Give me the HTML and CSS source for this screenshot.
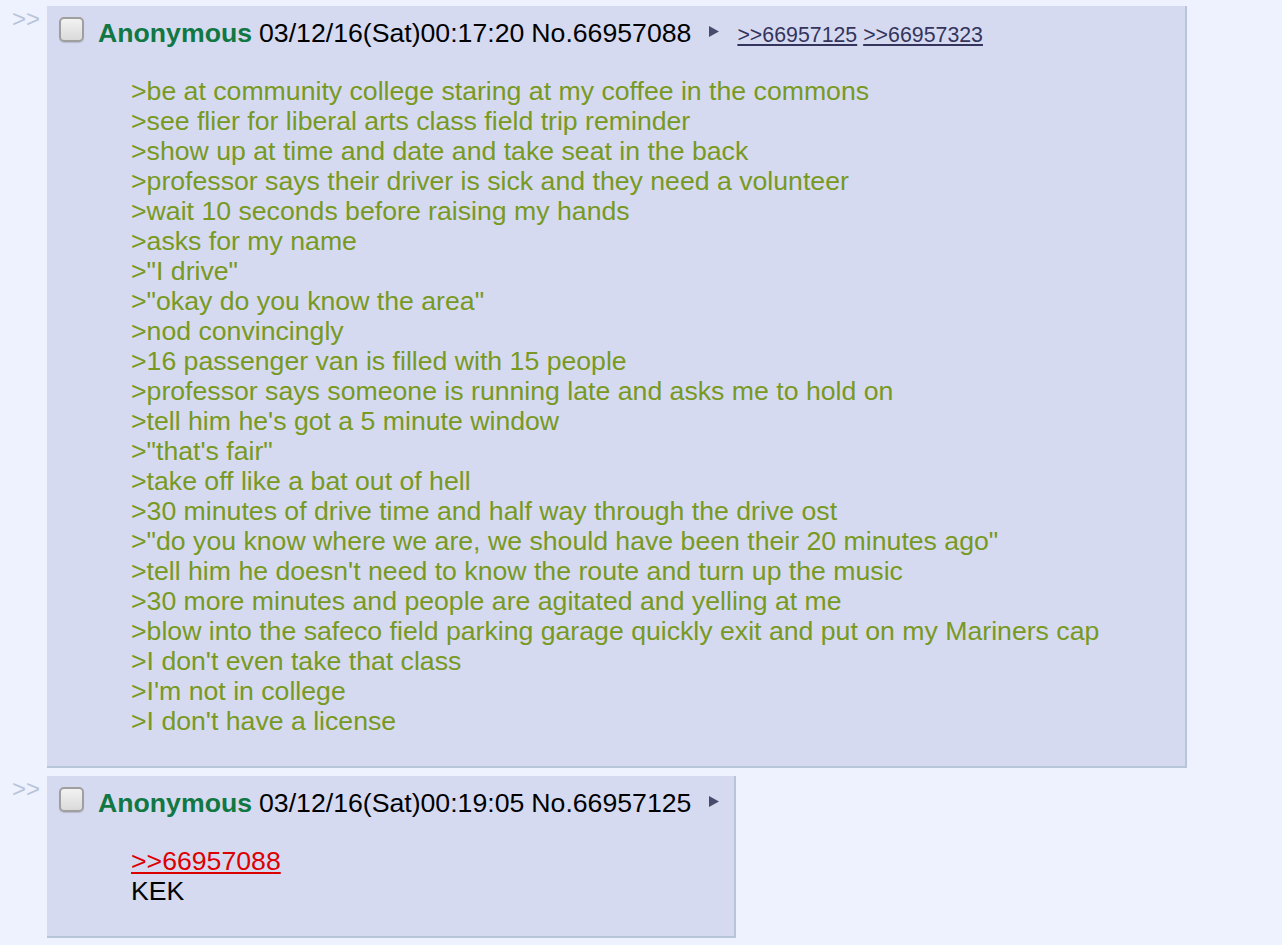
FILE: index.html
```
<!DOCTYPE html>
<html lang="en">
<head>
    <meta charset="UTF-8">
    <title>/b/ - Thread</title>
    <link rel="stylesheet" href="styles.css">
</head>
<body>
    <div class="thread">
        <div class="reply-wrap">
            <div class="side-arrows">&gt;&gt;</div>
            <div class="post">
                <div class="post-info">
                    <span class="check"></span>
                    <span class="name">Anonymous</span>
                    <span class="date">03/12/16(Sat)00:17:20</span>
                    <span class="num">No.66957088</span>
                    <svg class="menu-btn" width="10" height="11" viewBox="0 0 10 11"><path d="M0 0 L10 5.5 L0 11 Z"/></svg>
                    <span class="backlinks"><a href="#p66957125">&gt;&gt;66957125</a> <a href="#p66957323">&gt;&gt;66957323</a></span>
                </div>
                <blockquote class="message">
                    <span class="quote">&gt;be at community college staring at my coffee in the commons</span><br>
                    <span class="quote">&gt;see flier for liberal arts class field trip reminder</span><br>
                    <span class="quote">&gt;show up at time and date and take seat in the back</span><br>
                    <span class="quote">&gt;professor says their driver is sick and they need a volunteer</span><br>
                    <span class="quote">&gt;wait 10 seconds before raising my hands</span><br>
                    <span class="quote">&gt;asks for my name</span><br>
                    <span class="quote">&gt;"I drive"</span><br>
                    <span class="quote">&gt;"okay do you know the area"</span><br>
                    <span class="quote">&gt;nod convincingly</span><br>
                    <span class="quote">&gt;16 passenger van is filled with 15 people</span><br>
                    <span class="quote">&gt;professor says someone is running late and asks me to hold on</span><br>
                    <span class="quote">&gt;tell him he's got a 5 minute window</span><br>
                    <span class="quote">&gt;"that's fair"</span><br>
                    <span class="quote">&gt;take off like a bat out of hell</span><br>
                    <span class="quote">&gt;30 minutes of drive time and half way through the drive ost</span><br>
                    <span class="quote">&gt;"do you know where we are, we should have been their 20 minutes ago"</span><br>
                    <span class="quote">&gt;tell him he doesn't need to know the route and turn up the music</span><br>
                    <span class="quote">&gt;30 more minutes and people are agitated and yelling at me</span><br>
                    <span class="quote">&gt;blow into the safeco field parking garage quickly exit and put on my Mariners cap</span><br>
                    <span class="quote">&gt;I don't even take that class</span><br>
                    <span class="quote">&gt;I'm not in college</span><br>
                    <span class="quote">&gt;I don't have a license</span>
                </blockquote>
            </div>
        </div>

        <div class="reply-wrap">
            <div class="side-arrows">&gt;&gt;</div>
            <div class="post" id="p66957125">
                <div class="post-info">
                    <span class="check"></span>
                    <span class="name">Anonymous</span>
                    <span class="date">03/12/16(Sat)00:19:05</span>
                    <span class="num">No.66957125</span>
                    <svg class="menu-btn" width="10" height="11" viewBox="0 0 10 11"><path d="M0 0 L10 5.5 L0 11 Z"/></svg>
                </div>
                <blockquote class="message">
                    <a class="quotelink" href="#p66957088">&gt;&gt;66957088</a><br>
                    KEK
                </blockquote>
            </div>
        </div>
    </div>
</body>
</html>
```

FILE: styles.css
```
:root {
    --page-bg: #eef2ff;
    --reply-bg: #d6daf0;
    --reply-border: #b7c5d9;
    --name: #117743;
    --quote: #789922;
    --link: #34345c;
    --quotelink: #dd0000;
}

* {
    box-sizing: border-box;
}

body {
    margin: 0;
    background: var(--page-bg);
    color: #000;
    font-family: "Liberation Sans", Arial, sans-serif;
    font-size: 26.67px;
}

.thread {
    padding-top: 6px;
}

.reply-wrap {
    display: flex;
    align-items: flex-start;
    padding-left: 12px;
    margin-bottom: 8px;
}

.side-arrows {
    width: 35px;
    flex: none;
    color: var(--reply-border);
    font-size: 24px;
    line-height: 26px;
}

.post {
    flex: none;
    background: var(--reply-bg);
    border-right: 2px solid var(--reply-border);
    border-bottom: 2px solid var(--reply-border);
    padding: 4px;
}

.post-info {
    display: flex;
    align-items: baseline;
    height: 40px;
    line-height: 30px;
    padding: 7px 0 3px;
    white-space: nowrap;
}

.check {
    display: inline-block;
    width: 25px;
    height: 25px;
    margin: 0 0 1px 8px;
    border: 2px solid #9f9f9f;
    border-radius: 5px;
    background: linear-gradient(#f2f2f2, #dadada);
    box-shadow: 0 1px 1px rgba(0, 0, 0, 0.15);
}

.name {
    margin-left: 14px;
    color: var(--name);
    font-weight: 700;
}

.date {
    margin-left: 7px;
}

.num {
    margin-left: 7px;
}

.menu-btn {
    align-self: flex-start;
    flex: none;
    margin: 9px 11px 0 18px;
    fill: #4a4a6c;
}

.backlinks {
    margin-left: 7px;
    font-size: 21.33px;
    line-height: 20px;
}

.backlinks a {
    color: var(--link);
}

.message {
    margin: 26px 82px 26px 80px;
    line-height: 30px;
    white-space: nowrap;
}

.quote {
    color: var(--quote);
}

.quotelink {
    color: var(--quotelink);
}
```
